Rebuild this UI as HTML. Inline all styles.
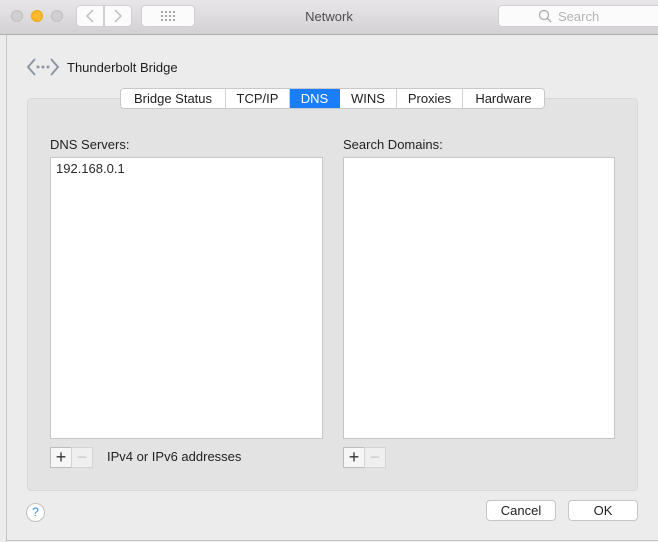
<!DOCTYPE html>
<html><head><style>
*{box-sizing:border-box;margin:0;padding:0}
body{width:658px;height:542px;overflow:hidden;background:#ececec;font-family:"Liberation Sans",sans-serif;font-size:13px;color:#222;position:relative}
.abs{position:absolute}
.tb{left:0;top:0;width:658px;height:35px;background:linear-gradient(#e8e6e8,#d3d1d3);border-bottom:1px solid #b0aeb0}
.dot{width:12px;height:12px;border-radius:50%;top:10px;background:#d0ced0;border:1px solid #c0bec0}
.btn{background:#fbfbfb;border:1px solid #d0d0d0;border-radius:4px}
.sheet{left:6px;top:35px;width:652px;height:506px;border-left:1px solid #c4c4c4;border-bottom:1px solid #c4c4c4;background:#ececec}
.panel{left:27px;top:98px;width:611px;height:393px;background:#e3e3e3;border:1px solid #d8d8d8;border-radius:4px}
.tabs{left:120px;top:88px;height:21px;display:flex;background:#fff;border:1px solid #c8c8c8;border-radius:4px;overflow:hidden}
.tabs div{text-align:center;line-height:19px;border-right:1px solid #d0d0d0;font-size:13px}
.tabs div:last-child{border-right:none}
.list{background:#fff;border:1px solid #c6c6c6}
.pm{width:22px;height:21px;border:1px solid #bdbdbd;background:#f6f6f6;font-size:18px;line-height:18px;text-align:center;color:#333}
.pbtn{height:21px;background:#fff;border:1px solid #c6c6c6;border-radius:4px;text-align:center;line-height:19px;font-size:13px}
</style></head><body>
<div class="abs tb"></div>
<div class="abs dot" style="left:11px"></div>
<div class="abs dot" style="left:31px;background:#fcb92b;border-color:#e8a61c"></div>
<div class="abs dot" style="left:51px"></div>
<div class="abs btn" style="left:76px;top:5px;width:28px;height:22px;border-radius:4px 0 0 4px"></div>
<div class="abs btn" style="left:104px;top:5px;width:28px;height:22px;border-radius:0 4px 4px 0"></div>
<svg class="abs" style="left:76px;top:5px" width="56" height="22"><path d="M17 5 L11 11 L17 17" stroke="#b8b8b8" stroke-width="1.3" fill="none"/><path d="M39 5 L45 11 L39 17" stroke="#b8b8b8" stroke-width="1.3" fill="none"/></svg>
<div class="abs btn" style="left:141px;top:5px;width:54px;height:22px"></div>
<svg class="abs" style="left:160px;top:10px" width="16" height="12"><g fill="#a8a8a8"><rect x="1" y="1" width="2" height="2"/><rect x="5" y="1" width="2" height="2"/><rect x="9" y="1" width="2" height="2"/><rect x="13" y="1" width="2" height="2"/><rect x="1" y="5" width="2" height="2"/><rect x="5" y="5" width="2" height="2"/><rect x="9" y="5" width="2" height="2"/><rect x="13" y="5" width="2" height="2"/><rect x="1" y="9" width="2" height="2"/><rect x="5" y="9" width="2" height="2"/><rect x="9" y="9" width="2" height="2"/><rect x="13" y="9" width="2" height="2"/></g></svg>
<div class="abs" style="left:0;width:658px;top:9px;text-align:center;font-size:13px;color:#4d4d4d">Network</div>
<div class="abs btn" style="left:498px;top:5px;width:165px;height:22px"></div>
<svg class="abs" style="left:538px;top:9px" width="14" height="14"><circle cx="6" cy="6" r="4.5" stroke="#a8a8a8" stroke-width="1.2" fill="none"/><path d="M9.3 9.3 L13 13" stroke="#a8a8a8" stroke-width="1.3"/></svg>
<div class="abs" style="left:558px;top:9px;color:#b4b4b4;font-size:13px">Search</div>
<div class="abs sheet"></div>
<svg class="abs" style="left:26px;top:57px" width="34" height="20"><path d="M9 2 L2 10 L9 18" stroke="#8e96a4" stroke-width="2" fill="none"/><path d="M25 2 L32 10 L25 18" stroke="#8e96a4" stroke-width="2" fill="none"/><circle cx="12" cy="10" r="1.5" fill="#8e96a4"/><circle cx="17" cy="10" r="1.5" fill="#8e96a4"/><circle cx="22" cy="10" r="1.5" fill="#8e96a4"/></svg>
<div class="abs" style="left:67px;top:60px;font-size:13px;color:#1e1e1e">Thunderbolt Bridge</div>
<div class="abs panel"></div>
<div class="abs tabs"><div style="width:105px">Bridge Status</div><div style="width:64px">TCP/IP</div><div style="width:50px;background:#1a7efb;color:#fff;border-right-color:#1a7efb">DNS</div><div style="width:57px">WINS</div><div style="width:66px">Proxies</div><div style="width:81px">Hardware</div></div>
<div class="abs" style="left:50px;top:137px">DNS Servers:</div>
<div class="abs" style="left:343px;top:137px">Search Domains:</div>
<div class="abs list" style="left:50px;top:157px;width:273px;height:282px"><div style="padding:3px 5px;color:#2a2a2a">192.168.0.1</div></div>
<div class="abs list" style="left:343px;top:157px;width:272px;height:282px"></div>
<div class="abs pm" style="left:50px;top:447px">+</div>
<div class="abs pm" style="left:71px;top:447px;color:#ccc;background:#efefef;border-color:#d4d4d4">−</div>
<div class="abs" style="left:107px;top:449px">IPv4 or IPv6 addresses</div>
<div class="abs pm" style="left:343px;top:447px">+</div>
<div class="abs pm" style="left:364px;top:447px;color:#ccc;background:#efefef;border-color:#d4d4d4">−</div>
<div class="abs" style="left:26px;top:503px;width:19px;height:19px;border-radius:50%;background:#fff;border:1px solid #c0c0c0;color:#3b88e8;text-align:center;line-height:17px;font-size:12px">?</div>
<div class="abs pbtn" style="left:486px;top:500px;width:70px">Cancel</div>
<div class="abs pbtn" style="left:568px;top:500px;width:70px">OK</div>
</body></html>
